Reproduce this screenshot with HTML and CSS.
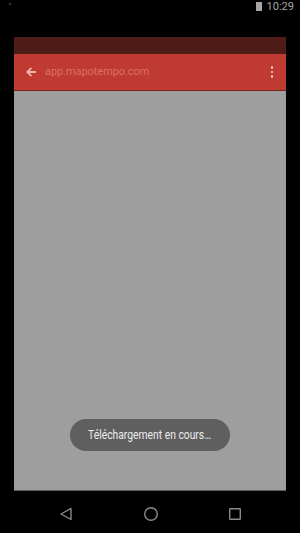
FILE: index.html
```html
<!DOCTYPE html>
<html>
<head>
<meta charset="utf-8">
<link rel="stylesheet" href="styles.css">
</head>
<body>
<div class="screen">
  <div class="status">
    <span class="dot"></span>
    <span class="status-right">
      <span class="battery"></span>
      <span class="time">10:29</span>
    </span>
  </div>
  <div class="window">
    <div class="strip"></div>
    <div class="toolbar">
      <svg class="back" width="12" height="12" viewBox="0 0 12 12"><path d="M11 6H2.5M6.5 1.8L2.2 6l4.3 4.2" fill="none" stroke="#f0b2ac" stroke-width="1.8"/></svg>
      <span class="url">app.mapotempo.com</span>
      <span class="menu"><i></i><i></i><i></i></span>
    </div>
    <div class="content">
      <div class="toast"><span class="toast-text">Téléchargement en cours…</span></div>
    </div>
  </div>
  <div class="nav">
    <svg width="14" height="14" viewBox="0 0 14 14"><path d="M12 1.5V12.5L2 7Z" fill="none" stroke="#8a8a8a" stroke-width="1.4" stroke-linejoin="round"/></svg>
    <svg width="16" height="16" viewBox="0 0 16 16"><circle cx="8" cy="8" r="6.3" fill="none" stroke="#8a8a8a" stroke-width="1.4"/></svg>
    <svg width="14" height="14" viewBox="0 0 14 14"><rect x="1.7" y="1.7" width="10.6" height="10.6" rx="0.5" fill="none" stroke="#8a8a8a" stroke-width="1.4"/></svg>
  </div>
</div>
</body>
</html>
```
FILE: styles.css
```css
html, body {
  margin: 0;
  padding: 0;
  background: #000;
}
.screen {
  width: 300px;
  height: 533px;
  display: flex;
  flex-direction: column;
  font-family: Roboto, "Noto Sans", sans-serif;
}
.status {
  height: 12px;
  display: flex;
  justify-content: space-between;
  align-items: center;
  padding: 0 6px 0 9px;
}
.dot {
  width: 2px;
  height: 2px;
  background: #333;
  margin-top: -5px;
}
.status-right {
  display: flex;
  align-items: center;
  gap: 5px;
}
.battery {
  width: 6px;
  height: 9px;
  background: #a6a6a6;
  margin-top: 1px;
}
.time {
  color: #a6a6a6;
  font-size: 11px;
  line-height: 12px;
  margin-top: 1px;
}
.window {
  margin: 25px 14px 0 14px;
  height: 454px;
  display: flex;
  flex-direction: column;
}
.strip {
  height: 17px;
  background: #4f1b16;
}
.toolbar {
  height: 36px;
  background: #bf3a30;
  border-bottom: 1px solid #7a261f;
  display: flex;
  align-items: center;
  padding: 0 13px 0 11px;
}
.back {
  display: block;
  margin-top: -1px;
}
.url {
  flex: 1;
  margin-left: 8px;
  color: #dc7068;
  font-size: 10.9px;
  margin-top: -1px;
}
.menu {
  display: flex;
  flex-direction: column;
  gap: 2px;
}
.menu i {
  display: block;
  width: 2.5px;
  height: 2.5px;
  background: #f0c8c4;
  border-radius: 1px;
}
.content {
  flex: 1;
  background: #9e9e9e;
  border-bottom: 1px solid #5c5c5c;
  position: relative;
}
.toast {
  position: absolute;
  left: 56px;
  top: 328px;
  width: 160px;
  height: 32px;
  border-radius: 16px;
  background: #5f5f5f;
  display: flex;
  align-items: center;
  justify-content: center;
}
.toast-text {
  color: #ececec;
  font-size: 12px;
  white-space: nowrap;
  display: inline-block;
  transform: scaleX(0.86);
}
.nav {
  flex: 1;
  display: flex;
  align-items: center;
  justify-content: space-between;
  padding: 0 58px 0 59px;
}
.nav svg {
  display: block;
  margin-top: 4px;
}
```
